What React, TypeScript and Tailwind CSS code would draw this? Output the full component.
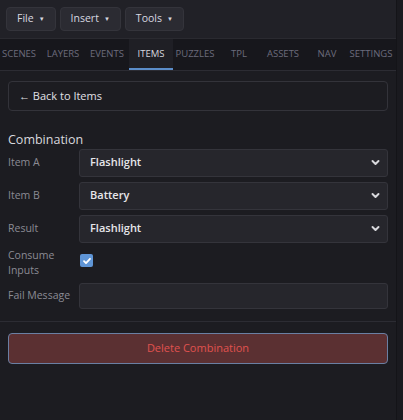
import React from 'react';

const tabs = ['SCENES', 'LAYERS', 'EVENTS', 'ITEMS', 'PUZZLES', 'TPL', 'ASSETS', 'NAV', 'SETTINGS'];

const Caret = () => <span className="ml-[5px] text-[6px] leading-none">▼</span>;

const Chevron = () => (
  <svg width="9" height="9" viewBox="0 0 12 12" className="text-[#d8d8dc]">
    <path d="M2 4l4 4 4-4" fill="none" stroke="currentColor" strokeWidth="2.6" strokeLinecap="round" strokeLinejoin="round" />
  </svg>
);

const SelectRow = ({ label, value }: { label: string; value: string }) => (
  <div className="flex items-center">
    <span className="w-[71px] shrink-0 text-[10.5px] text-[#8b8b94]">{label}</span>
    <div className="flex-1 h-[28px] flex items-center justify-between pl-[10px] pr-[7px] bg-[#26262c] border border-[#34343b] rounded-[3px]">
      <span className="text-[11px] font-semibold text-[#e6e6ea]">{value}</span>
      <Chevron />
    </div>
  </div>
);

export default function App() {
  return (
    <div className="w-[403px] h-[420px] flex bg-[#1c1c21] overflow-hidden" style={{ fontFamily: '"Open Sans", "Noto Sans", sans-serif' }}>
      <div className="w-[397px] flex flex-col border-r border-[#141418]">
        <div className="h-[38px] flex items-center gap-1 px-1.5 bg-[#212127]">
          {['File', 'Insert', 'Tools'].map((b) => (
            <div
              key={b}
              className="h-[24px] flex items-center px-[10px] bg-[#2b2b32] border border-[#34343b] rounded-[4px] text-[10.5px] text-[#d8d8e0]"
            >
              {b}
              <Caret />
            </div>
          ))}
        </div>
        <div className="h-[33px] flex items-stretch bg-[#17171c] border-b border-[#2c2c33] border-t border-t-[#2a2a30] overflow-hidden">
          <div className="flex items-stretch ml-[-3px]">
            {tabs.map((t) => {
              const active = t === 'ITEMS';
              return (
                <div
                  key={t}
                  className={
                    active
                      ? 'w-[44px] shrink-0 flex items-center justify-center whitespace-nowrap text-[9.5px] text-[#d6d6de] bg-[#1f1f25] border-b-2 border-[#5b8dc9] pt-[2px]'
                      : 'w-[44px] shrink-0 flex items-center justify-center whitespace-nowrap text-[9.5px] text-[#6c6c7c]'
                  }
                >
                  {t}
                </div>
              );
            })}
          </div>
        </div>
        <div className="px-2 pt-[10px] flex flex-col">
          <div className="h-[30px] flex items-center px-[10px] border border-[#33333a] rounded-[4px] text-[11px] text-[#e0e0e6]">
            ← Back to Items
          </div>
          <div className="mt-[23px] text-[12.5px] text-[#d8d8de] leading-none">Combination</div>
          <div className="mt-[2px] flex flex-col gap-[5px]">
            <SelectRow label="Item A" value="Flashlight" />
            <SelectRow label="Item B" value="Battery" />
            <SelectRow label="Result" value="Flashlight" />
            <div className="flex items-center h-[30px]">
              <span className="w-[71px] shrink-0 text-[10.5px] leading-[15px] text-[#8b8b94]">
                Consume
                <br />
                Inputs
              </span>
              <div className="w-[13px] h-[13px] ml-[1px] mt-[-4px] rounded-[2px] bg-[#5f95d6] flex items-center justify-center">
                <svg width="10" height="10" viewBox="0 0 10 10">
                  <path d="M2 5.2l2 2L8 2.8" fill="none" stroke="white" strokeWidth="1.8" strokeLinecap="round" strokeLinejoin="round" />
                </svg>
              </div>
            </div>
            <div className="flex items-center">
              <span className="w-[71px] shrink-0 text-[10.5px] text-[#8b8b94]">Fail Message</span>
              <div className="flex-1 h-[26px] bg-[#26262c] border border-[#34343b] rounded-[3px]" />
            </div>
          </div>
        </div>
        <div className="mt-[12px] border-t border-[#2c2c33]" />
        <div className="px-2 pt-[11px]">
          <div className="h-[31px] flex items-center justify-center bg-[#5b3032] border border-[#6a7fa3] rounded-[4px] text-[11px] text-[#e0524f]">
            Delete Combination
          </div>
        </div>
      </div>
      <div className="flex-1 bg-[#1a1a1f]" />
    </div>
  );
}
